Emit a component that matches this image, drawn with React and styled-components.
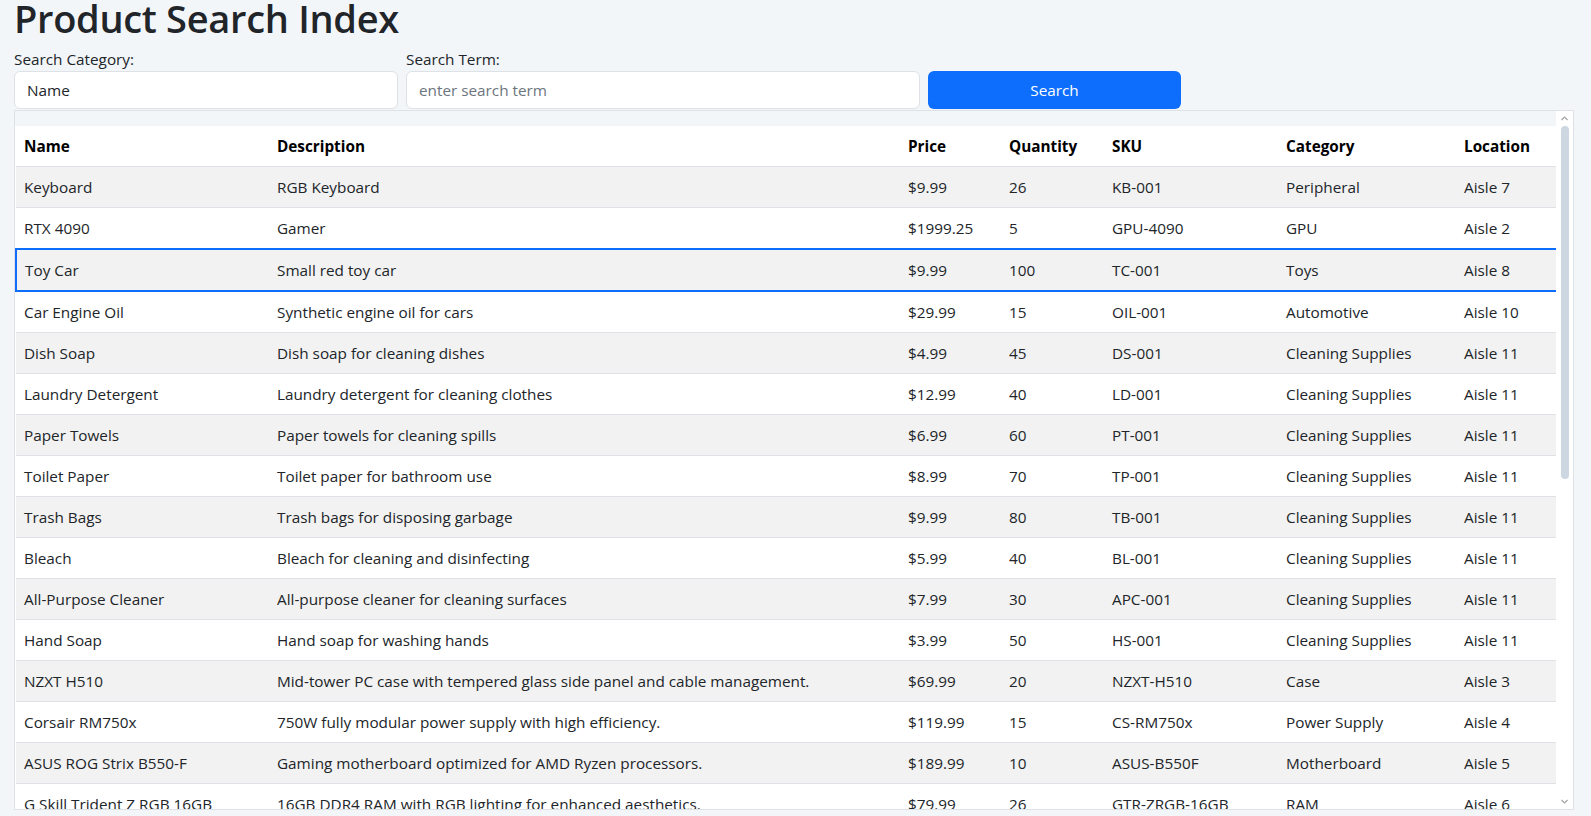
import React, { useState } from 'react';
import styled, { createGlobalStyle } from 'styled-components';

const GlobalStyle = createGlobalStyle`
  html, body {
    margin: 0;
    padding: 0;
    background: #f3f6f9;
    overflow: hidden;
  }
  body {
    font-family: "Open Sans", "Noto Sans", sans-serif;
    font-size: 15.3px;
    line-height: 1.5;
    color: #212529;
  }
  * {
    box-sizing: border-box;
  }
`;

const Page = styled.div`
  padding: 0 17px 0 14px;
`;

const Title = styled.h1`
  margin: -6px 0 5px 0;
  font-size: 38px;
  line-height: 48px;
  font-weight: 600;
  color: #212529;
  letter-spacing: -0.3px;
`;

const SearchBar = styled.form`
  display: flex;
  align-items: flex-end;
  gap: 8px;
  margin-bottom: 1px;
`;

const Field = styled.div`
  display: flex;
  flex-direction: column;
  width: ${(p) => p.width}px;
`;

const Label = styled.label`
  font-size: 15.3px;
  line-height: 24px;
  color: #212529;
`;

const Input = styled.input`
  height: 38px;
  padding: 6px 12px;
  border: 1px solid #dee2e6;
  border-radius: 6px;
  background: #fff;
  font-family: inherit;
  font-size: 15.3px;
  color: #212529;

  &::placeholder {
    color: #6c757d;
  }

  &:focus {
    outline: none;
    border-color: #86b7fe;
  }
`;

const SearchButton = styled.button`
  width: 253px;
  height: 38px;
  border: none;
  border-radius: 6px;
  background: #0d6efd;
  color: #fff;
  font-family: inherit;
  font-size: 15.3px;
  cursor: pointer;

  &:hover {
    background: #0b5ed7;
  }
`;

const TableFrame = styled.div`
  display: flex;
  height: 700px;
  border: 1px solid #dee2e6;
`;

const ScrollArea = styled.div`
  flex: 1;
  overflow-y: auto;
  padding-top: 15px;
`;

const Rail = styled.div`
  width: 17px;
  flex-shrink: 0;
  background: #fff;
  display: flex;
  flex-direction: column;
  align-items: center;
`;

const RailButton = styled.div`
  height: 15px;
  width: 17px;
  display: flex;
  align-items: center;
  justify-content: center;
  color: #a3a3a3;
  margin-top: ${(p) => (p.$bottom ? 'auto' : '0')};
`;

const Thumb = styled.div`
  width: 8px;
  height: 353px;
  border-radius: 4px;
  background: #cdd7e1;
`;

const Table = styled.table`
  width: 100%;
  border-collapse: collapse;
  table-layout: fixed;
  background: #fff;
`;

const HeadCell = styled.th`
  text-align: left;
  font-weight: 700;
  color: #000;
  padding: 8px;
  line-height: 24px;
  border-bottom: 1px solid #dee2e6;
  white-space: nowrap;
`;

const Row = styled.tr`
  background: ${(p) => (p.$striped ? '#f2f2f2' : '#fff')};
  cursor: pointer;
`;

const Cell = styled.td`
  padding: 8px;
  line-height: 24px;
  border-bottom: 1px solid #dee2e6;
  color: #212529;
  white-space: nowrap;

  ${(p) =>
    p.$selected &&
    `
    border-top: 2px solid #0d6efd;
    border-bottom: 2px solid #0d6efd;
    &:first-child { border-left: 2px solid #0d6efd; }
    &:last-child { border-right: 2px solid #0d6efd; }
  `}
`;

const Chevron = ({ down }) => (
  <svg width="7" height="5" viewBox="0 0 7 5" fill="none">
    <path
      d={down ? 'M0.5 1 L3.5 4 L6.5 1' : 'M0.5 4 L3.5 1 L6.5 4'}
      stroke="currentColor"
      strokeWidth="1.2"
    />
  </svg>
);

const columns = [
  { key: 'name', label: 'Name', width: 253 },
  { key: 'description', label: 'Description', width: 631 },
  { key: 'price', label: 'Price', width: 101 },
  { key: 'quantity', label: 'Quantity', width: 103 },
  { key: 'sku', label: 'SKU', width: 174 },
  { key: 'category', label: 'Category', width: 178 },
  { key: 'location', label: 'Location', width: 102 },
];

const products = [
  ['Keyboard', 'RGB Keyboard', '$9.99', 26, 'KB-001', 'Peripheral', 'Aisle 7'],
  ['RTX 4090', 'Gamer', '$1999.25', 5, 'GPU-4090', 'GPU', 'Aisle 2'],
  ['Toy Car', 'Small red toy car', '$9.99', 100, 'TC-001', 'Toys', 'Aisle 8'],
  ['Car Engine Oil', 'Synthetic engine oil for cars', '$29.99', 15, 'OIL-001', 'Automotive', 'Aisle 10'],
  ['Dish Soap', 'Dish soap for cleaning dishes', '$4.99', 45, 'DS-001', 'Cleaning Supplies', 'Aisle 11'],
  ['Laundry Detergent', 'Laundry detergent for cleaning clothes', '$12.99', 40, 'LD-001', 'Cleaning Supplies', 'Aisle 11'],
  ['Paper Towels', 'Paper towels for cleaning spills', '$6.99', 60, 'PT-001', 'Cleaning Supplies', 'Aisle 11'],
  ['Toilet Paper', 'Toilet paper for bathroom use', '$8.99', 70, 'TP-001', 'Cleaning Supplies', 'Aisle 11'],
  ['Trash Bags', 'Trash bags for disposing garbage', '$9.99', 80, 'TB-001', 'Cleaning Supplies', 'Aisle 11'],
  ['Bleach', 'Bleach for cleaning and disinfecting', '$5.99', 40, 'BL-001', 'Cleaning Supplies', 'Aisle 11'],
  ['All-Purpose Cleaner', 'All-purpose cleaner for cleaning surfaces', '$7.99', 30, 'APC-001', 'Cleaning Supplies', 'Aisle 11'],
  ['Hand Soap', 'Hand soap for washing hands', '$3.99', 50, 'HS-001', 'Cleaning Supplies', 'Aisle 11'],
  ['NZXT H510', 'Mid-tower PC case with tempered glass side panel and cable management.', '$69.99', 20, 'NZXT-H510', 'Case', 'Aisle 3'],
  ['Corsair RM750x', '750W fully modular power supply with high efficiency.', '$119.99', 15, 'CS-RM750x', 'Power Supply', 'Aisle 4'],
  ['ASUS ROG Strix B550-F', 'Gaming motherboard optimized for AMD Ryzen processors.', '$189.99', 10, 'ASUS-B550F', 'Motherboard', 'Aisle 5'],
  ['G Skill Trident Z RGB 16GB', '16GB DDR4 RAM with RGB lighting for enhanced aesthetics.', '$79.99', 26, 'GTR-ZRGB-16GB', 'RAM', 'Aisle 6'],
  ['Samsung 970 EVO Plus', '1TB NVMe M.2 SSD with fast read and write speeds.', '$99.99', 18, 'SS-970EVO', 'Storage', 'Aisle 6'],
  ['Logitech G502', 'High performance wired gaming mouse.', '$49.99', 35, 'LG-G502', 'Peripheral', 'Aisle 7'],
];

const App = () => {
  const [category, setCategory] = useState('Name');
  const [term, setTerm] = useState('');
  const [selected, setSelected] = useState(2);

  return (
    <Page>
      <GlobalStyle />
      <Title>Product Search Index</Title>

      <SearchBar onSubmit={(e) => e.preventDefault()}>
        <Field width={384}>
          <Label>Search Category:</Label>
          <Input value={category} onChange={(e) => setCategory(e.target.value)} />
        </Field>
        <Field width={514}>
          <Label>Search Term:</Label>
          <Input
            placeholder="enter search term"
            value={term}
            onChange={(e) => setTerm(e.target.value)}
          />
        </Field>
        <SearchButton type="submit">Search</SearchButton>
      </SearchBar>

      <TableFrame>
        <ScrollArea>
          <Table>
            <colgroup>
              {columns.map((c) => (
                <col key={c.key} style={{ width: c.width }} />
              ))}
            </colgroup>
            <thead>
              <tr>
                {columns.map((c) => (
                  <HeadCell key={c.key}>{c.label}</HeadCell>
                ))}
              </tr>
            </thead>
            <tbody>
              {products.map((p, i) => (
                <Row key={p[4]} $striped={i % 2 === 0} onClick={() => setSelected(i)}>
                  {p.map((v, j) => (
                    <Cell key={j} $selected={i === selected}>
                      {v}
                    </Cell>
                  ))}
                </Row>
              ))}
            </tbody>
          </Table>
        </ScrollArea>
        <Rail>
          <RailButton>
            <Chevron />
          </RailButton>
          <Thumb />
          <RailButton $bottom>
            <Chevron down />
          </RailButton>
        </Rail>
      </TableFrame>
    </Page>
  );
};

export default App;
